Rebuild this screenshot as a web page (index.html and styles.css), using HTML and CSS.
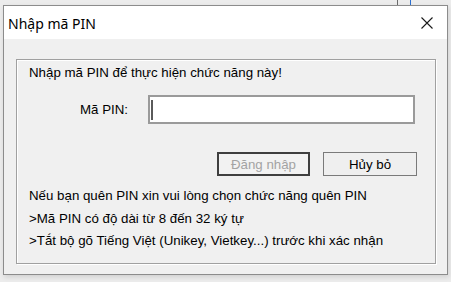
FILE: index.html
```html
<!DOCTYPE html>
<html lang="vi">
<head>
<meta charset="utf-8">
<title>Nhập mã PIN</title>
<link rel="stylesheet" href="styles.css">
</head>
<body>
<div class="window">
  <div class="titlebar">
    <span class="title">Nhập mã PIN</span>
    <svg class="close" width="12" height="12" viewBox="0 0 12 12"><path d="M0.5 0.5 L11.5 11.5 M11.5 0.5 L0.5 11.5" stroke="#1a1a1a" stroke-width="1.1" fill="none"/></svg>
  </div>
  <div class="content">
    <div class="group">
      <div class="prompt">Nhập mã PIN để thực hiện chức năng này!</div>
      <div class="pin-row">
        <label class="pin-label">Mã PIN:</label>
        <div class="pin-input"><span class="caret"></span></div>
      </div>
      <div class="buttons">
        <button class="btn btn-default" disabled>Đăng nhập</button>
        <button class="btn">Hủy bỏ</button>
      </div>
      <div class="notes">
        <div class="note">Nếu bạn quên PIN xin vui lòng chọn chức năng quên PIN</div>
        <div class="note">&gt;Mã PIN có độ dài từ 8 đến 32 ký tự</div>
        <div class="note">&gt;Tắt bộ gõ Tiếng Việt (Unikey, Vietkey...) trước khi xác nhận</div>
      </div>
    </div>
  </div>
</div>
</body>
</html>
```
FILE: styles.css
```css
html, body {
  margin: 0;
  padding: 0;
}
body {
  width: 451px;
  height: 282px;
  overflow: hidden;
  background:
    linear-gradient(to right, transparent 397px, #6b6b6b 397px, #6b6b6b 398px, transparent 398px, transparent 410px, #2a6fd0 410px, #2a6fd0 411px, transparent 411px) top left / 451px 5px no-repeat,
    #ececec;
  font-family: "Liberation Sans", Arial, sans-serif;
}
.window {
  margin: 5px 0 0 3px;
  width: 443px;
  height: 268px;
  border: 1px solid #8c8c8c;
  background: #f0f0f0;
  display: flex;
  flex-direction: column;
  box-shadow: 1px 2px 5px rgba(0, 0, 0, 0.12);
}
.titlebar {
  height: 33px;
  background: #ffffff;
  display: flex;
  align-items: center;
  justify-content: space-between;
  padding: 0 14px 0 4px;
  flex: none;
}
.title {
  font-family: "Noto Sans", "Open Sans", sans-serif;
  font-size: 14px;
  color: #000;
  margin-top: 1px;
}
.content {
  flex: 1;
  padding: 20px 11px 10px 12px;
  display: flex;
}
.group {
  flex: 1;
  border: 1px solid #a0a0a0;
  box-shadow: inset 1px 1px 0 #ffffff, 1px 1px 0 #ffffff;
  padding: 5px 18px 0 12px;
  display: flex;
  flex-direction: column;
  font-size: 13.3px;
  color: #000;
}
.prompt {
  line-height: 16px;
}
.pin-row {
  display: flex;
  align-items: center;
  margin-top: 14px;
}
.pin-label {
  width: 99px;
  padding-right: 20px;
  text-align: right;
}
.pin-input {
  width: 263px;
  height: 25px;
  border: 2px solid #9a9a9a;
  background: #ffffff;
  display: flex;
  align-items: center;
}
.caret {
  width: 2px;
  height: 20px;
  background: #5a5a5a;
  margin-left: 1px;
}
.buttons {
  display: flex;
  justify-content: flex-end;
  gap: 13px;
  margin-top: 28px;
}
.btn {
  width: 94px;
  height: 24px;
  box-sizing: border-box;
  border: 1px solid #7a7a7a;
  background: #efefef;
  font-family: "Liberation Sans", Arial, sans-serif;
  font-size: 13.3px;
  color: #000;
  padding: 0;
  margin: 0;
}
.btn-default {
  width: 93px;
  border: 2px solid #3f3f3f;
  color: #a3a3a3;
  background: #f2f2f2;
}
.notes {
  margin-top: 9px;
  display: flex;
  flex-direction: column;
}
.note {
  line-height: 22px;
  height: 22.5px;
}
```
